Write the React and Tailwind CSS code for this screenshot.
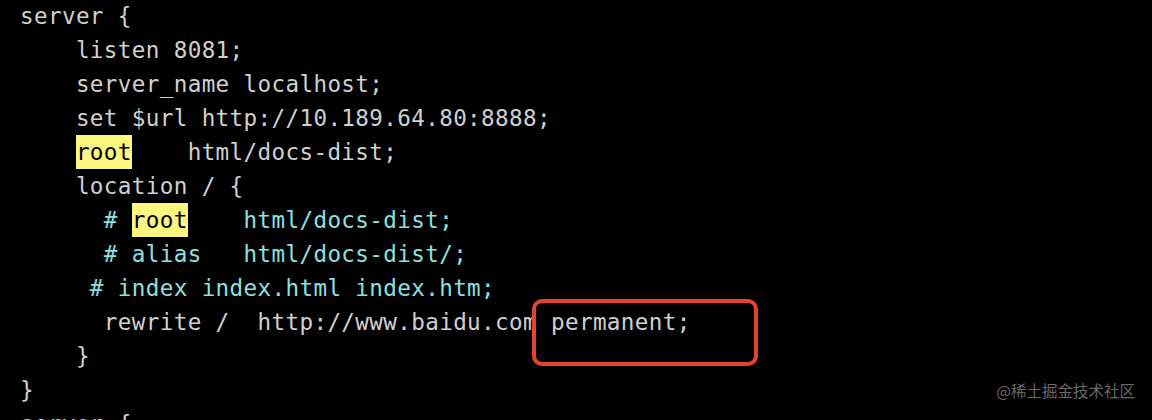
import React from 'react';

const lines = [
    [{ t: 'server {' }],
    [{ t: '    listen 8081;' }],
    [{ t: '    server_name localhost;' }],
    [{ t: '    set $url http://10.189.64.80:8888;' }],
    [{ t: '    ' }, { t: 'root', hl: true }, { t: '    html/docs-dist;' }],
    [{ t: '    location / {' }],
    [{ t: '      # ', c: true }, { t: 'root', hl: true }, { t: '    html/docs-dist;', c: true }],
    [{ t: '      # alias   html/docs-dist/;', c: true }],
    [{ t: '     # index index.html index.htm;', c: true }],
    [{ t: '      rewrite /  http://www.baidu.com permanent;' }],
    [{ t: '    }' }],
    [{ t: '}' }],
    [{ t: 'server {' }],
];

const App = () => {
    return (
        <div className="relative w-[1152px] h-[420px] bg-black overflow-hidden">
            <div className="pl-[20px] -mt-[1px] font-['DejaVu_Sans_Mono',monospace] text-[22.6px] tracking-[0.37px] text-[#d0d0d0]">
                {lines.map((parts, i) => (
                    <div key={i} className="h-[34px] leading-[34px] whitespace-pre">
                        {parts.map((p, j) =>
                            p.hl ? (
                                <span key={j} className="inline-block h-[34px] leading-[34px] bg-[#fcf680] text-black">{p.t}</span>
                            ) : (
                                <span key={j} className={p.c ? 'text-[#8ae2e0]' : ''}>{p.t}</span>
                            )
                        )}
                    </div>
                ))}
            </div>

            {/* red annotation box */}
            <div className="absolute left-[532px] top-[299px] w-[226px] h-[67px] border-[4px] border-[#e5432f] rounded-[10px]" />

            <div className="absolute right-[17px] bottom-[18px] font-['Noto_Sans_CJK_SC',sans-serif] text-[15.5px] text-[#686868]">
                @稀土掘金技术社区
            </div>
        </div>
    );
};

export default App;
